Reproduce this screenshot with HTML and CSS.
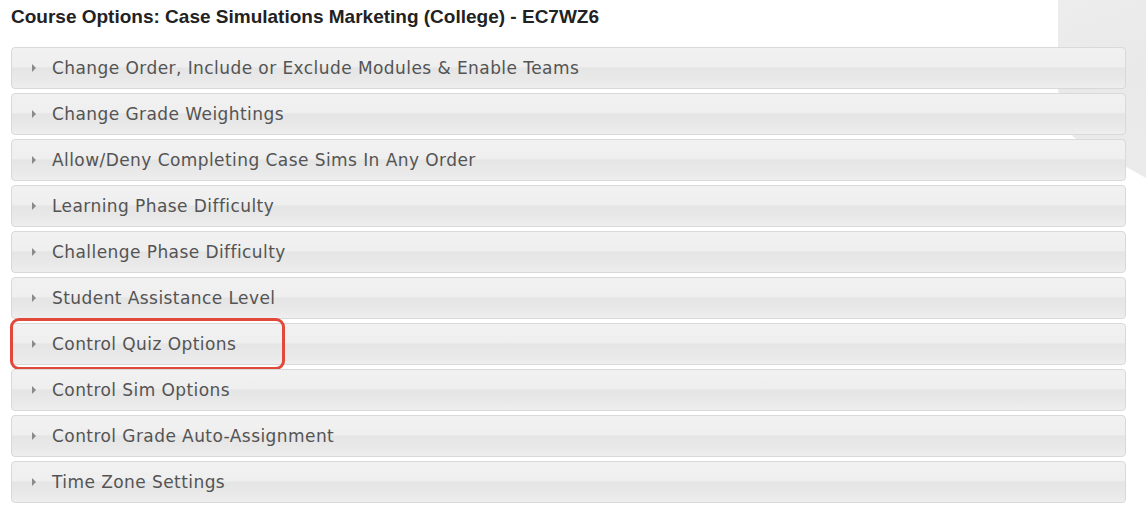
FILE: index.html
```html
<!DOCTYPE html>
<html lang="en">
<head>
  <meta charset="UTF-8" />
  <title>Course Options</title>
  <link rel="stylesheet" href="styles.css">
</head>
<body>

  <div class="backdrop"></div>

  <div class="page">
    <h1 class="page-title">Course Options: Case Simulations Marketing (College) - EC7WZ6</h1>

    <div class="accordion">
      <div class="acc-header"><span class="arrow"></span>Change Order, Include or Exclude Modules &amp; Enable Teams</div>
      <div class="acc-header"><span class="arrow"></span>Change Grade Weightings</div>
      <div class="acc-header"><span class="arrow"></span>Allow/Deny Completing Case Sims In Any Order</div>
      <div class="acc-header"><span class="arrow"></span>Learning Phase Difficulty</div>
      <div class="acc-header"><span class="arrow"></span>Challenge Phase Difficulty</div>
      <div class="acc-header"><span class="arrow"></span>Student Assistance Level</div>
      <div class="acc-header highlighted"><span class="arrow"></span>Control Quiz Options<span class="callout"></span></div>
      <div class="acc-header"><span class="arrow"></span>Control Sim Options</div>
      <div class="acc-header"><span class="arrow"></span>Control Grade Auto-Assignment</div>
      <div class="acc-header"><span class="arrow"></span>Time Zone Settings</div>
    </div>
  </div>

</body>
</html>
```

FILE: styles.css
```css
body {
  margin: 0;
  background: #fff;
  font-family: "DejaVu Sans", Verdana, sans-serif;
  overflow: hidden;
}

.backdrop {
  position: absolute;
  top: 0;
  right: 0;
  width: 88px;
  height: 180px;
  background: linear-gradient(160deg, #ededed 0%, #e9e9e9 45%, #ebebeb 100%);
  clip-path: polygon(0 0, 100% 0, 100% 178px, 15px 137px, 0 90px);
}

.page {
  position: relative;
  padding: 0 20px 0 11px;
}

.page-title {
  margin: 0;
  padding-top: 6px;
  height: 47px;
  box-sizing: border-box;
  font-family: "Liberation Sans", Arial, sans-serif;
  font-size: 19px;
  font-weight: bold;
  color: #222;
}

.accordion {
  display: flex;
  flex-direction: column;
  gap: 4px;
}

.acc-header {
  position: relative;
  display: flex;
  align-items: center;
  height: 42px;
  box-sizing: border-box;
  padding-left: 20px;
  border: 1px solid #d9d9d9;
  border-radius: 4px;
  background: linear-gradient(to bottom, #f1f1f1 0%, #efefef 47%, #e5e5e5 50%, #e9e9e9 80%, #eeeeee 100%);
  color: #545454;
  font-size: 17px;
  letter-spacing: 0.43px;
  cursor: pointer;
}

.arrow {
  width: 0;
  height: 0;
  margin-right: 16px;
  border-top: 4px solid transparent;
  border-bottom: 4px solid transparent;
  border-left: 4px solid #8a8a8a;
}

.callout {
  position: absolute;
  left: -2px;
  top: -6px;
  width: 275px;
  height: 52px;
  box-sizing: border-box;
  border: 3px solid #e2493b;
  border-radius: 9px;
}
```
